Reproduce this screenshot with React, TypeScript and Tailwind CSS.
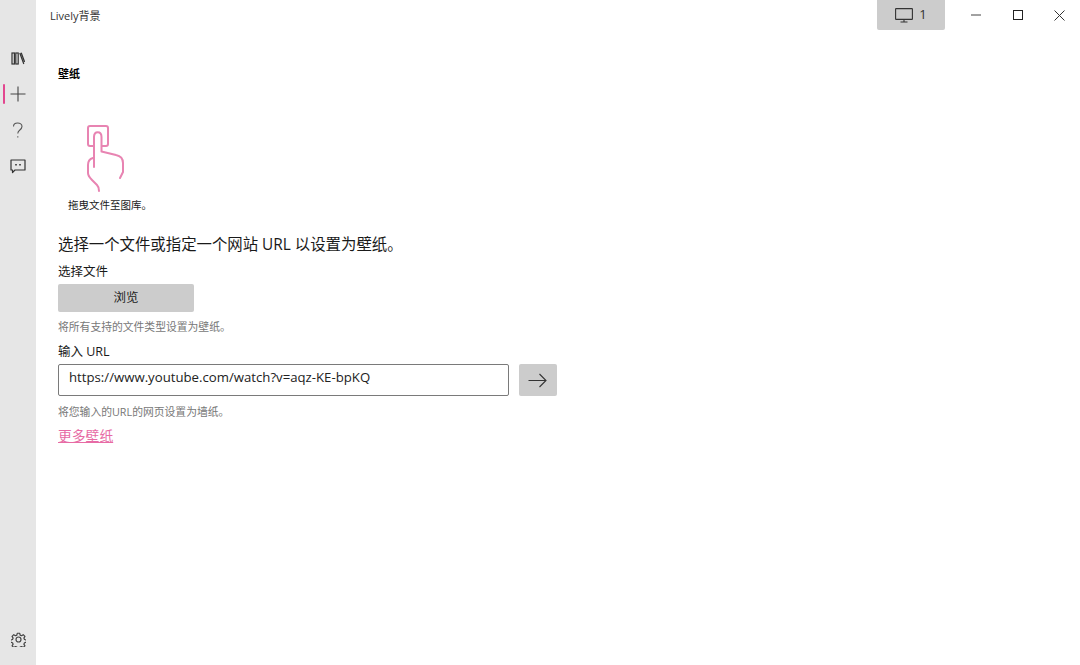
const cjk = "font-['Open_Sans','Noto_Sans_CJK_SC',sans-serif]";

function NavLibrary() {
  return (
    <svg width="14" height="13" viewBox="0 0 14 13" fill="none" stroke="#333" strokeWidth="1.2">
      <rect x="1" y="1" width="2.4" height="11" />
      <rect x="4.800" y="1" width="2.4" height="11" />
      <path d="M8.800 1 L12.800 12 M10.200 0.800 L13.600 10" />
    </svg>
  );
}

function NavPlus() {
  return (
    <svg width="16" height="16" viewBox="0 0 16 16" fill="none" stroke="#444" strokeWidth="1.1">
      <path d="M8 0.500V15.500M0.500 8H15.500" />
    </svg>
  );
}

function NavHelp() {
  return (
    <svg width="12" height="17" viewBox="0 0 12 17" fill="none" stroke="#555" strokeWidth="1.1">
      <path d="M1.500 4.500C1.500 2.300 3.400 1 5.600 1C8 1 10 2.400 10 4.600C10 6.300 9 7.200 7.600 8.200C6.400 9.100 5.800 9.900 5.800 11.500" />
      <path d="M5.800 14.200V15.600" />
    </svg>
  );
}

function NavFeedback() {
  return (
    <svg width="16" height="15" viewBox="0 0 16 15" fill="none" stroke="#333" strokeWidth="1.2">
      <path d="M1 1H15V11H5L2.500 13.600V11H1Z" strokeLinejoin="round" />
      <path d="M6 5V6.600M10 5V6.600" strokeWidth="1.6" />
    </svg>
  );
}

function Gear() {
  return (
    <svg width="15" height="15" viewBox="0 0 24 24" fill="none" stroke="#444" strokeWidth="1.9" strokeLinejoin="round">
      <path d="M10 2h4l.6 3 2.300 1 2.600-1.700 2.800 2.800-1.700 2.600 1 2.300 3 .6v4l-3 .6-1 2.300 1.700 2.600-2.800 2.800-2.600-1.700-2.300 1-.6 3h-4l-.6-3-2.300-1-2.600 1.700-2.800-2.800 1.700-2.600-1-2.300-3-.6v-4l3-.6 1-2.300-1.700-2.600 2.800-2.800 2.600 1.700 2.300-1z" />
      <circle cx="12" cy="12" r="4" />
    </svg>
  );
}

function TouchIcon() {
  return (
    <svg width="37" height="67" viewBox="0 0 37 67" fill="none" stroke="#e884b2" strokeWidth="2" strokeLinecap="round" strokeLinejoin="round">
      <path d="M6 21H3A2 2 0 0 1 1 19V3A2 2 0 0 1 3 1H19A2 2 0 0 1 21 3V19A2 2 0 0 1 19 21H15" />
      <path d="M7 42V12C7 5.500 14.500 5.500 14.500 12V26.500L29 30C34 31 36 34 36 38V47L33 53" />
      <path d="M6 33C2.500 34 1 36 1 40V48C1 51 3 53 5 55L10 60C11.500 61.500 12 63 12 66" />
    </svg>
  );
}

function Monitor() {
  return (
    <svg width="18" height="15" viewBox="0 0 18 15" fill="none" stroke="#333" strokeWidth="1.1">
      <rect x="0.600" y="0.600" width="16.800" height="10.800" rx="0.500" />
      <path d="M9 11.500V14M5.500 14H12.500" />
    </svg>
  );
}

function NavItem({ children, active }: { children: React.ReactNode; active?: boolean }) {
  return (
    <div className="relative flex h-9 w-9 items-center justify-center">
      {active && <div className="absolute left-[3px] top-[8px] h-[20px] w-[2px] rounded-full bg-[#e2478f]" />}
      {children}
    </div>
  );
}

export default function App() {
  return (
    <div className={`flex h-[665px] w-[1080px] overflow-hidden bg-white text-[#1a1a1a] ${cjk}`}>
      <aside className="flex w-9 shrink-0 flex-col items-center bg-[#e6e6e6] pt-[40px] pb-[8px]">
        <NavItem><NavLibrary /></NavItem>
        <NavItem active><NavPlus /></NavItem>
        <NavItem><NavHelp /></NavItem>
        <NavItem><NavFeedback /></NavItem>
        <div className="mt-auto flex h-9 w-9 items-center justify-center"><Gear /></div>
      </aside>

      <main className="flex min-w-0 flex-1 flex-col">
        <header className="flex h-[30px] items-start justify-between pl-[14px]">
          <span className="mt-[8px] text-[11px] leading-[16px] text-[#333]">Lively背景</span>
          <div className="flex items-start">
            <div className="flex h-[30px] w-[68px] items-center justify-center gap-[6px] rounded-b-[2px] bg-[#cccccc] text-[13px] text-[#333]">
              <Monitor />
              <span>1</span>
            </div>
            <div className="ml-[10px] flex">
              <div className="flex h-[30px] w-[42px] items-center justify-center">
                <svg width="10" height="2" viewBox="0 0 10 2"><path d="M0 1H10" stroke="#444" strokeWidth="1" /></svg>
              </div>
              <div className="flex h-[30px] w-[42px] items-center justify-center">
                <svg width="10" height="10" viewBox="0 0 10 10" fill="none"><rect x="0.500" y="0.500" width="9" height="9" stroke="#222" /></svg>
              </div>
              <div className="flex h-[30px] w-[41px] items-center justify-center pr-[1px]">
                <svg width="11" height="11" viewBox="0 0 11 11" fill="none"><path d="M0.500 0.500L10.500 10.500M10.500 0.500L0.500 10.500" stroke="#333" strokeWidth="1" /></svg>
              </div>
            </div>
          </div>
        </header>

        <section className="flex flex-col items-start pl-[22px]">
          <h1 className="mt-[37px] text-[11px] font-bold leading-[14px] text-black">壁纸</h1>
          <div className="mt-[44px] ml-[29px]"><TouchIcon /></div>
          <p className="mt-[6px] ml-[10px] text-[10.500px] leading-[14px]">拖曳文件至图库。</p>
          <h2 className="mt-[22px] text-[15.400px] leading-[22px] text-[#1a1a1a]">选择一个文件或指定一个网站 URL 以设置为壁纸。</h2>
          <label className="mt-[7px] text-[12.500px] leading-[18px]">选择文件</label>
          <button className="mt-[3px] h-[28px] w-[136px] rounded-[2px] bg-[#cccccc] text-[12.500px] text-[#222]">浏览</button>
          <p className="mt-[7px] text-[10.800px] leading-[15px] text-[#777]">将所有支持的文件类型设置为壁纸。</p>
          <label className="mt-[9px] text-[12.500px] leading-[18px]">输入 URL</label>
          <div className="mt-[3px] flex items-start gap-[10px]">
            <div className="flex h-[32px] w-[451px] items-center rounded-[2px] border border-[#7a7a7a] pb-[4px] pl-[10px] text-[13.200px] text-[#222]">
              https://www.youtube.com/watch?v=aqz-KE-bpKQ
            </div>
            <button className="flex h-[32px] w-[38px] items-center justify-center rounded-[2px] bg-[#cccccc] pr-[2px]">
              <svg width="19" height="15" viewBox="0 0 19 15" fill="none" stroke="#333" strokeWidth="1.1"><path d="M0.500 7.500H18M11.500 1L18 7.500L11.500 14" /></svg>
            </button>
          </div>
          <p className="mt-[8px] text-[10.800px] leading-[15px] text-[#777]">将您输入的URL的网页设置为墙纸。</p>
          <a className="mt-[7px] text-[13.800px] leading-[20px] text-[#e76ba5] underline">更多壁纸</a>
        </section>
      </main>
    </div>
  );
}
